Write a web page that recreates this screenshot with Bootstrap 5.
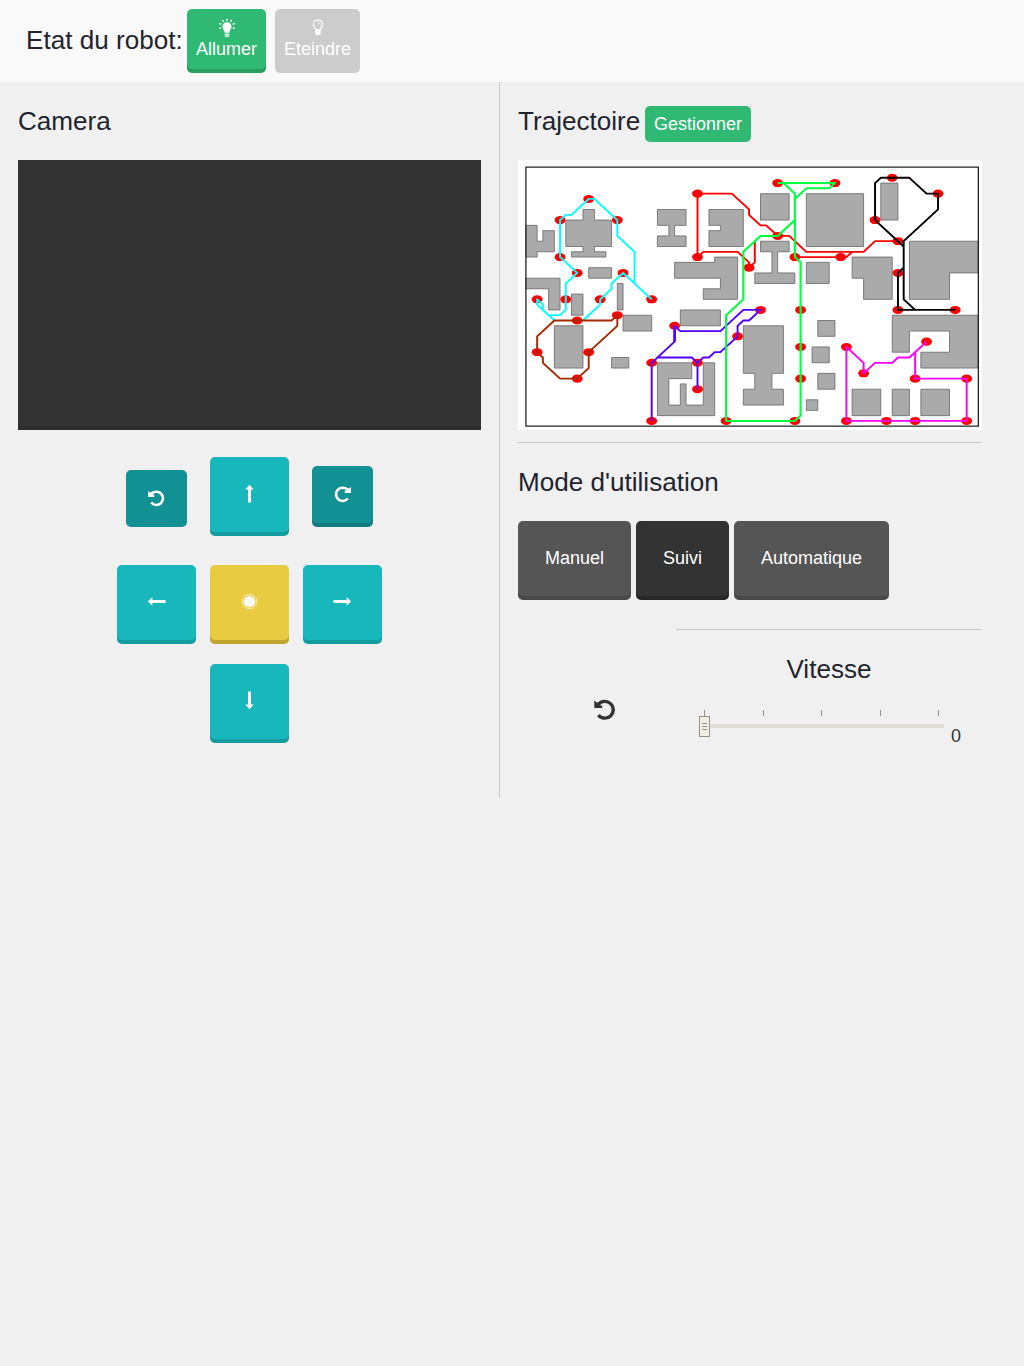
<!DOCTYPE html>
<html lang="fr">
<head>
<meta charset="utf-8">
<meta name="viewport" content="width=device-width, initial-scale=1">
<title>Etat du robot</title>
<link href="https://cdn.jsdelivr.net/npm/bootstrap@5.3.0/dist/css/bootstrap.min.css" rel="stylesheet">
<style>
body{background:#f0f0f0;font-family:"Liberation Sans",Arial,sans-serif;font-size:18px;line-height:20px;color:#333}
.title{font-size:26.1px;line-height:30px;font-weight:400;color:#1f242e;margin:0;white-space:nowrap}
.topbar{height:82px;background:#f9f9f9;padding-left:26px}
.topbar .title{padding-top:25px;width:161px}
.topbar .btn{height:64px;margin-top:9px;padding:8px 0 0}
.btn,.btn:disabled{border:0;border-radius:5px;color:#fff;font-size:18px;line-height:20px;padding:0;opacity:1}
.btn svg{display:block}
.raised{box-shadow:inset 0 -4px rgba(0,0,0,.14)}
.b-green,.b-green:hover{background:#30b972}
.b-off,.b-off:disabled{background:#ccc}
.b-cyan,.b-cyan:hover{background:#18b7bb}
.b-teal,.b-teal:hover{background:#119194}
.b-yellow,.b-yellow:hover{background:#e8cb40;box-shadow:inset 0 -4px #bda52f}
.b-grey,.b-grey:hover{background:#555}
.b-dark,.b-dark:hover{background:#333;box-shadow:inset 0 -4px rgba(0,0,0,.25)}
.left-pane{width:500px;height:716px;border-right:1px solid #c8c8c8;padding:24px 18px 0}
.right-pane{width:482px;padding:24px 0 0 18px}
.head-line{height:54px}
.camera{height:270px;background:#333;border-bottom:4px solid #2d2d2d}
.left-pane .sq{width:79px;height:79px;padding:27px 0 0}
.left-pane .turn{width:61px;height:57px;padding:19px 0 0}
.left-pane .turn.raised{height:61px}
.rule{height:1px;background:#c8c8c8}
.mode-btn{height:79px;padding:0 27px 5px}
.speed{width:306px}
</style>
<script src="https://cdn.jsdelivr.net/npm/bootstrap@5.3.0/dist/js/bootstrap.bundle.min.js"></script>
</head>
<body>
<svg width="0" height="0" class="d-none">
  <symbol id="undo" viewBox="0 0 24 24"><path d="M5.300 6.500A8.400 8.400 0 1 1 5.300 17.100" fill="none" stroke="currentColor" stroke-width="3.300"/><path d="M1.300 2.500l2.400 2L6 4.200l1.300 3.200h1.900V10H1.300z" fill="currentColor"/></symbol>
  <symbol id="arrow" viewBox="0 0 19 19"><path d="M9.500 .7l4.200 4.700H11V18.500H8V5.400H5.300z" fill="currentColor"/></symbol>
</svg>
<header class="topbar d-flex align-items-start">
  <h1 class="title">Etat du robot:</h1>
  <button class="btn b-green raised d-flex flex-column align-items-center" style="width:79px">
    <svg width="20" height="22" viewBox="0 0 20 22"><path d="M10 5.200c-2.700 0-4.500 2-4.500 4.400 0 2.700 2 3.600 2.200 6.200h4.600c.2-2.600 2.200-3.500 2.200-6.200 0-2.400-1.800-4.400-4.500-4.400z" fill="#fff"/><path d="M7.700 17.400h4.600M7.700 19.200h4.600M10 1.700v2.200M5.400 3l1.300 1.800M14.600 3l-1.300 1.800M2.300 6.300l2.100 1M17.700 6.300l-2.100 1M2 11.300l2.200-.4M18 11.300l-2.200-.4" fill="none" stroke="#fff" stroke-width="1.300"/></svg>
    <span>Allumer</span>
  </button>
  <button class="btn b-off d-flex flex-column align-items-center" style="width:85px;margin-left:9px">
    <svg width="20" height="22" viewBox="0 0 20 22"><path d="M10 3.200c-2.900 0-4.700 1.900-4.700 4.300 0 2.100 1.900 3 2.400 5h4.600c.5-2 2.400-2.900 2.400-5 0-2.400-1.800-4.300-4.700-4.300z" fill="none" stroke="#fff" stroke-width="1.200"/><path d="M7.300 12h5.400v4.500c0 2.400-5.400 2.400-5.400 0z" fill="#fff"/><path d="M10 5.600c1.600 0 2.400.8 2.400 2.200" fill="none" stroke="#fff" stroke-width=".9"/></svg>
    <span>Eteindre</span>
  </button>
</header>
<main class="d-flex">
  <section class="left-pane">
    <div class="head-line"><h2 class="title">Camera</h2></div>
    <div class="camera"></div>
    <div class="d-flex justify-content-center align-items-start" style="padding-top:27px">
      <button class="btn b-teal turn d-flex justify-content-center" style="margin:13px 23px 0 0"><svg width="19" height="19"><use href="#undo"/></svg></button>
      <button class="btn b-cyan raised sq d-flex justify-content-center"><svg width="19" height="19"><use href="#arrow"/></svg></button>
      <button class="btn b-teal raised turn d-flex justify-content-center" style="margin:9px 0 0 23px"><svg width="19" height="19" style="transform:scaleX(-1)"><use href="#undo"/></svg></button>
    </div>
    <div class="d-flex justify-content-center" style="gap:14px;padding-top:29px">
      <button class="btn b-cyan raised sq d-flex justify-content-center"><svg width="19" height="19" style="transform:rotate(-90deg)"><use href="#arrow"/></svg></button>
      <button class="btn b-yellow sq d-flex justify-content-center"><svg width="19" height="19" viewBox="-1.500 -1.500 19 19"><circle cx="8" cy="8" r="5.600" fill="#fff"/><path d="M5.200 1.200h5.600l4 4v5.600l-4 4H5.200l-4-4V5.200z" fill="none" stroke="#fff" stroke-opacity=".75" stroke-width="1"/></svg></button>
      <button class="btn b-cyan raised sq d-flex justify-content-center"><svg width="19" height="19" style="transform:rotate(90deg)"><use href="#arrow"/></svg></button>
    </div>
    <div class="d-flex justify-content-center" style="padding-top:20px">
      <button class="btn b-cyan raised sq d-flex justify-content-center"><svg width="19" height="19" style="transform:rotate(180deg)"><use href="#arrow"/></svg></button>
    </div>
  </section>
  <section class="right-pane">
    <div class="head-line d-flex align-items-start"><h2 class="title" style="width:127px">Trajectoire</h2><button class="btn b-green" style="width:106px;height:36px">Gestionner</button></div>
    <svg class="d-block" width="464" height="270" viewBox="0 0 464 270">
      <rect width="464" height="270" fill="#fff"/>
      <g transform="translate(7.700 7.200) scale(5.727 5.286)">
        <path fill="#aaa" stroke="#666" stroke-width=".8" vector-effect="non-scaling-stroke" d="M0 11H2V14H3V12H5V16H2V17H0z M7 10H10V8H12V10H15V15H12V16H14V17H8V16H10V15H7z M11 19H15V21H11z M0 21H6V27H4V23H0z M8 24H10V28H8z M16 22H17V27H16z M17 28H22V31H17z M5 30H10V38H5z M15 36H18V38H15z M23 8H28V11H26V13H28V15H23V13H25V11H23z M32 8H38V15H32V12H34V11H32z M26 18H33V17H37V25H31V23H34V21H26z M41 5H46V10H41z M49 5H59V15H49z M41 14H46V16H44V20H47V22H40V20H43V16H41z M49 18H53V22H49z M62 3H65V10H62z M57 17H64V25H59V21H57z M67 14H79V20H74V25H67z M64 28H79V38H69V35H74V31H67V35H64z M57 42H62V47H57z M64 42H67V47H64z M69 42H74V47H69z M27 27H34V30H27z M38 30H45V39H43V42H45V45H38V42H40V39H38z M23 37H29V40H25V45H27V41H28V45H31V37H33V47H23z M51 29H54V32H51z M50 34H53V37H50z M51 39H54V42H51z M49 44H51V46H49z"/>
        <rect vector-effect="non-scaling-stroke" x=".04" y="0" width="79" height="49" fill="none" stroke="#222" stroke-width="1.300"/>
        <g id="waypoints" fill="#f00"></g>
        <g fill="none" stroke-width=".34" stroke-linejoin="round">
          <path stroke="#f00" d="M30 17V5H36L39 8V9L41 11H42L44 13H46L49 16H59L61 14H65 M47 17H56L57 16 M30 17L31 16H37L39 18V19L40 18V14"/>
          <path stroke="#0ff" d="M19 22V16L16 13V10L12 6H11L8 9H7L6 10V17L9 20L7 22V27L6 28H4L3 27V26L2 25V26L5 29 M22 25L17 20L15 22V23L13 25V26L10 29"/>
          <path stroke="#a52a00" d="M5 29H15L16 28V30L11 35V38L9 40H6L3 37V36L2 35V32z"/>
          <path stroke="#50f" d="M22 48V37L26 33V30L27 31H34L38 27H41L39 29H38L37 30V32L34 35H33L32 36H31L30 37V42 M30 37L29 36H23"/>
          <path stroke="#50f" stroke-width=".44" d="M26 33V30"/>
          <path stroke="#00ff41" stroke-width=".38" d="M44 3H54L53 4H49L47 6 M45 3L47 5V17L48 18V47L47 48H35V28L38 25V16L41 13H44L47 10"/>
          <path stroke="#000" d="M66 15L61 10V3L62 2H67L70 5H72V8L66 14V25L68 27 M66 19L65 20V27H75"/>
          <path stroke="#f0f" d="M70 33L67 36H65L64 37H61L59 39V37L56 34V48H77V40H68V35"/>
        </g>
      </g>
    </svg>
    <div class="rule" style="margin-top:12px"></div>
    <h2 class="title" style="margin-top:24px">Mode d'utilisation</h2>
    <div class="d-flex" style="gap:5px;margin-top:24px">
      <button class="btn b-grey raised mode-btn">Manuel</button>
      <button class="btn b-dark mode-btn">Suivi</button>
      <button class="btn b-grey raised mode-btn">Automatique</button>
    </div>
    <div class="d-flex justify-content-between" style="margin-top:29px">
      <div style="padding:69px 0 0 75px"><svg class="d-block" width="24" height="24"><use href="#undo"/></svg></div>
      <div class="speed">
        <div class="rule"></div>
        <h2 class="title text-center" style="margin-top:24px">Vitesse</h2>
        <div class="d-flex" style="padding-left:22px;margin-top:24px">
          <svg class="d-block" width="253" height="32" viewBox="0 0 253 32">
            <path d="M6.500 2v6M65.500 2v6M123.500 2v6M182.500 2v6M240.500 2v6" stroke="#999084"/>
            <rect x="6" y="16" width="240" height="4" fill="#e0ddd6"/>
            <rect x="1.500" y="8.500" width="10" height="20" fill="#f1ede7" stroke="#999084"/>
            <path d="M4 15.500h5M4 18.500h5M4 21.500h5" stroke="#999084"/>
          </svg>
          <span style="padding-top:18px">0</span>
        </div>
      </div>
    </div>
  </section>
</main>
<script>
/* Grid positions (column, row) of the waypoints on the map */
const points=[[11,6],[6,10],[16,10],[6,17],[9,20],[17,20],[2,25],[7,25],[13,25],[22,25],[9,29],[16,28],[2,35],[11,35],[9,40],
[30,5],[30,17],[39,19],[44,3],[54,3],[44,13],[47,17],[55,17],[64,2],[72,5],[61,10],[65,14],[65,20],[65,27],[75,27],
[26,30],[22,37],[22,48],[30,37],[30,42],[41,27],[37,32],[48,27],[48,34],[48,40],[35,48],[47,48],
[56,34],[59,39],[70,33],[68,40],[77,40],[56,48],[63,48],[68,48],[77,48]];
document.getElementById('waypoints').innerHTML=points.map(([x,y])=>`<ellipse cx="${x}" cy="${y}" rx=".95" ry=".76"/>`).join('');
</script>
</body>
</html>
